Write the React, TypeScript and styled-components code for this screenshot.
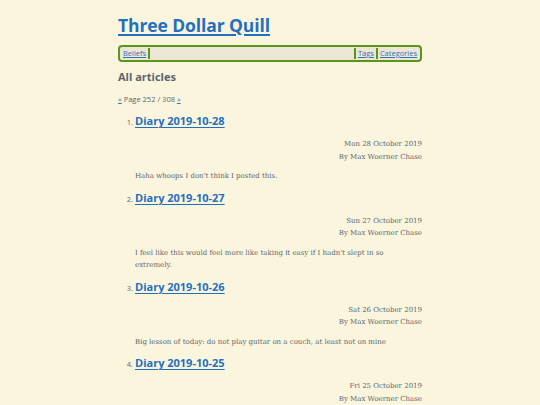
import React from "react";
import styled, { createGlobalStyle } from "styled-components";

const Global = createGlobalStyle`
  html, body { margin: 0; padding: 0; background: #fcf5dd; }
  body { color: #5b6770; }
`;

const Page = styled.div`
  width: 304px;
  margin: 0 auto;
  padding-top: 13px;
`;

const SiteTitle = styled.h1`
  margin: 0;
  font-family: "Open Sans", "Noto Sans", sans-serif;
  font-weight: 700;
  font-size: 17.5px;
  line-height: 24px;
  letter-spacing: -0.1px;
  a { color: #1f70c0; text-decoration: underline; text-decoration-thickness: 1.5px; text-underline-offset: 2px; }
`;

const Nav = styled.nav`
  margin-top: 8px;
  display: flex;
  align-items: center;
  height: 11px;
  padding: 1px 1px;
  border: 2px solid #5c951c;
  border-radius: 4px;
  background: #ebe6d5;
`;

const NavLink = styled.a<{ $side: "left" | "right" }>`
  font-family: "Open Sans", "Noto Sans", sans-serif;
  font-size: 7.5px;
  line-height: 11px;
  color: #2f76b8;
  text-decoration: underline;
  padding: 0 2px;
  ${(p) => (p.$side === "left" ? "border-right: 2px solid #5c951c;" : "border-left: 2px solid #5c951c;")}
`;

const Spacer = styled.div`
  flex: 1;
`;

const SectionTitle = styled.h2`
  margin: 7px 0 0;
  font-family: "Open Sans", "Noto Sans", sans-serif;
  font-weight: 700;
  font-size: 11px;
  line-height: 16px;
  color: #586570;
`;

const Pager = styled.div`
  margin-top: 9px;
  font-family: "Open Sans", "Noto Sans", sans-serif;
  font-size: 7.5px;
  line-height: 10px;
  color: #5b6770;
  a { color: #2f76b8; text-decoration: underline; }
`;

const List = styled.ol`
  margin: 9px 0 0;
  padding-left: 17px;
  li::marker { font-family: "Open Sans", "Noto Sans", sans-serif; font-size: 7.5px; color: #5b6770; }
`;

const Item = styled.li`
  margin-bottom: 0;
`;

const ItemTitle = styled.h3`
  margin: 0;
  font-family: "Open Sans", "Noto Sans", sans-serif;
  font-weight: 700;
  font-size: 11px;
  line-height: 16px;
  a { color: #1f70c0; text-decoration: underline; text-underline-offset: 1.5px; text-decoration-thickness: 1.2px; }
`;

const Meta = styled.div`
  margin-top: 9px;
  text-align: right;
  font-family: "DejaVu Serif", serif;
  font-size: 7px;
  line-height: 12.5px;
  color: #5b6770;
`;

const Body = styled.p`
  margin: 7px 0 0;
  padding-bottom: 7px;
  font-family: "DejaVu Serif", serif;
  font-size: 7px;
  line-height: 12.5px;
  color: #5b6770;
`;

const posts = [
  { title: "Diary 2019-10-28", date: "Mon 28 October 2019", body: "Haha whoops I don't think I posted this." },
  { title: "Diary 2019-10-27", date: "Sun 27 October 2019", body: "I feel like this would feel more like taking it easy if I hadn't slept in so extremely." },
  { title: "Diary 2019-10-26", date: "Sat 26 October 2019", body: "Big lesson of today: do not play guitar on a couch, at least not on mine" },
  { title: "Diary 2019-10-25", date: "Fri 25 October 2019", body: "" },
];

export default function App() {
  return (
    <>
      <Global />
      <Page>
        <SiteTitle><a href="#">Three Dollar Quill</a></SiteTitle>
        <Nav>
          <NavLink href="#" $side="left">Beliefs</NavLink>
          <Spacer />
          <NavLink href="#" $side="right">Tags</NavLink>
          <NavLink href="#" $side="right">Categories</NavLink>
        </Nav>
        <SectionTitle>All articles</SectionTitle>
        <Pager><a href="#">«</a> Page 252 / 308 <a href="#">»</a></Pager>
        <List>
          {posts.map((p) => (
            <Item key={p.title}>
              <ItemTitle><a href="#">{p.title}</a></ItemTitle>
              <Meta>
                <div>{p.date}</div>
                <div>By Max Woerner Chase</div>
              </Meta>
              {p.body && <Body>{p.body}</Body>}
            </Item>
          ))}
        </List>
      </Page>
    </>
  );
}
